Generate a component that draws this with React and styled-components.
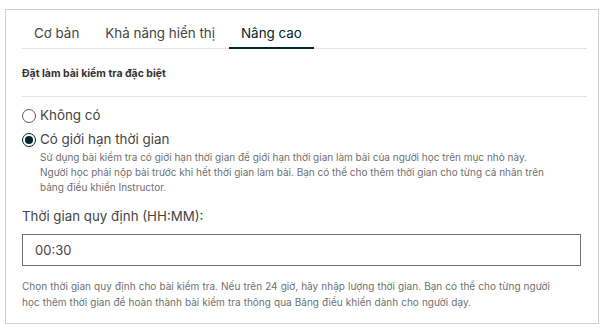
import React from "react";
import styled, { createGlobalStyle } from "styled-components";

const Global = createGlobalStyle`
  html, body { margin: 0; padding: 0; background: #fff; }
  body { font-family: Inter, "Noto Sans", sans-serif; color: #454545; }
`;

const Page = styled.div`
  padding: 9px 6px 4px 5px;
`;

const Card = styled.div`
  border: 1px solid #cfcfcf;
  padding: 4px 11px 13px 16px;
`;

const Tabs = styled.div`
  display: flex;
  border-bottom: 1px solid #e6e1e1;
`;

const Tab = styled.div`
  padding: 9px 12px 4px;
  margin-right: ${(p) => (p.$gap ? "2px" : "0")};
  font-size: 13.4px;
  line-height: 20px;
  color: ${(p) => (p.$active ? "#00262b" : "#454545")};
  border-bottom: 2px solid ${(p) => (p.$active ? "#00262b" : "transparent")};
  margin-bottom: -1px;
`;

const Heading = styled.div`
  font-size: 10.5px;
  font-weight: 700;
  color: #333;
  padding: 18px 0 15px;
  line-height: 14px;
  border-bottom: 1px solid #e3e3e3;
`;

const Options = styled.div`
  padding-top: 9px;
  display: flex;
  flex-direction: column;
  gap: 5px;
`;

const Option = styled.label`
  display: grid;
  grid-template-columns: 18px 1fr;
  align-items: start;
`;

const Circle = styled.span`
  width: 14px;
  height: 14px;
  box-sizing: border-box;
  border-radius: 50%;
  border: 1.4px solid ${(p) => (p.$checked ? "#00262b" : "#5a5a5a")};
  margin-top: 2.5px;
  display: flex;
  align-items: center;
  justify-content: center;
  &::after {
    content: "";
    width: 8px;
    height: 8px;
    border-radius: 50%;
    background: ${(p) => (p.$checked ? "#00262b" : "transparent")};
  }
`;

const OptionLabel = styled.span`
  font-size: 13.4px;
  line-height: 19px;
  color: #454545;
`;

const Desc = styled.div`
  grid-column: 2;
  font-size: 10px;
  line-height: 15px;
  color: #707070;
  margin-top: 1px;
`;

const FieldLabel = styled.div`
  font-size: 13.3px;
  line-height: 20px;
  margin-top: 11px;
  color: #454545;
`;

const Input = styled.div`
  margin-top: 8px;
  margin-right: 6px;
  height: 32px;
  box-sizing: border-box;
  border: 1px solid #707070;
  padding: 0 12px;
  display: flex;
  align-items: center;
  font-size: 13px;
  color: #454545;
`;

const Help = styled.div`
  margin-top: 12px;
  font-size: 10px;
  line-height: 16px;
  word-spacing: 0.3px;
  color: #707070;
`;

export default function App() {
  return (
    <>
      <Global />
      <Page>
        <Card>
          <Tabs>
            <Tab $gap>Cơ bản</Tab>
            <Tab $gap>Khả năng hiển thị</Tab>
            <Tab $active>Nâng cao</Tab>
          </Tabs>
          <Heading>Đặt làm bài kiểm tra đặc biệt</Heading>
          <Options>
            <Option>
              <Circle />
              <OptionLabel>Không có</OptionLabel>
            </Option>
            <Option>
              <Circle $checked />
              <OptionLabel>Có giới hạn thời gian</OptionLabel>
              <Desc>
                Sử dụng bài kiểm tra có giới hạn thời gian để giới hạn thời gian làm bài của người học trên mục nhỏ này.
                <br />
                Người học phải nộp bài trước khi hết thời gian làm bài. Bạn có thể cho thêm thời gian cho từng cá nhân trên
                <br />
                bảng điều khiển Instructor.
              </Desc>
            </Option>
          </Options>
          <FieldLabel>Thời gian quy định (HH:MM):</FieldLabel>
          <Input>00:30</Input>
          <Help>
            Chọn thời gian quy định cho bài kiểm tra. Nếu trên 24 giờ, hãy nhập lượng thời gian. Bạn có thể cho từng người
            <br />
            học thêm thời gian để hoàn thành bài kiểm tra thông qua Bảng điều khiển dành cho người dạy.
          </Help>
        </Card>
      </Page>
    </>
  );
}
